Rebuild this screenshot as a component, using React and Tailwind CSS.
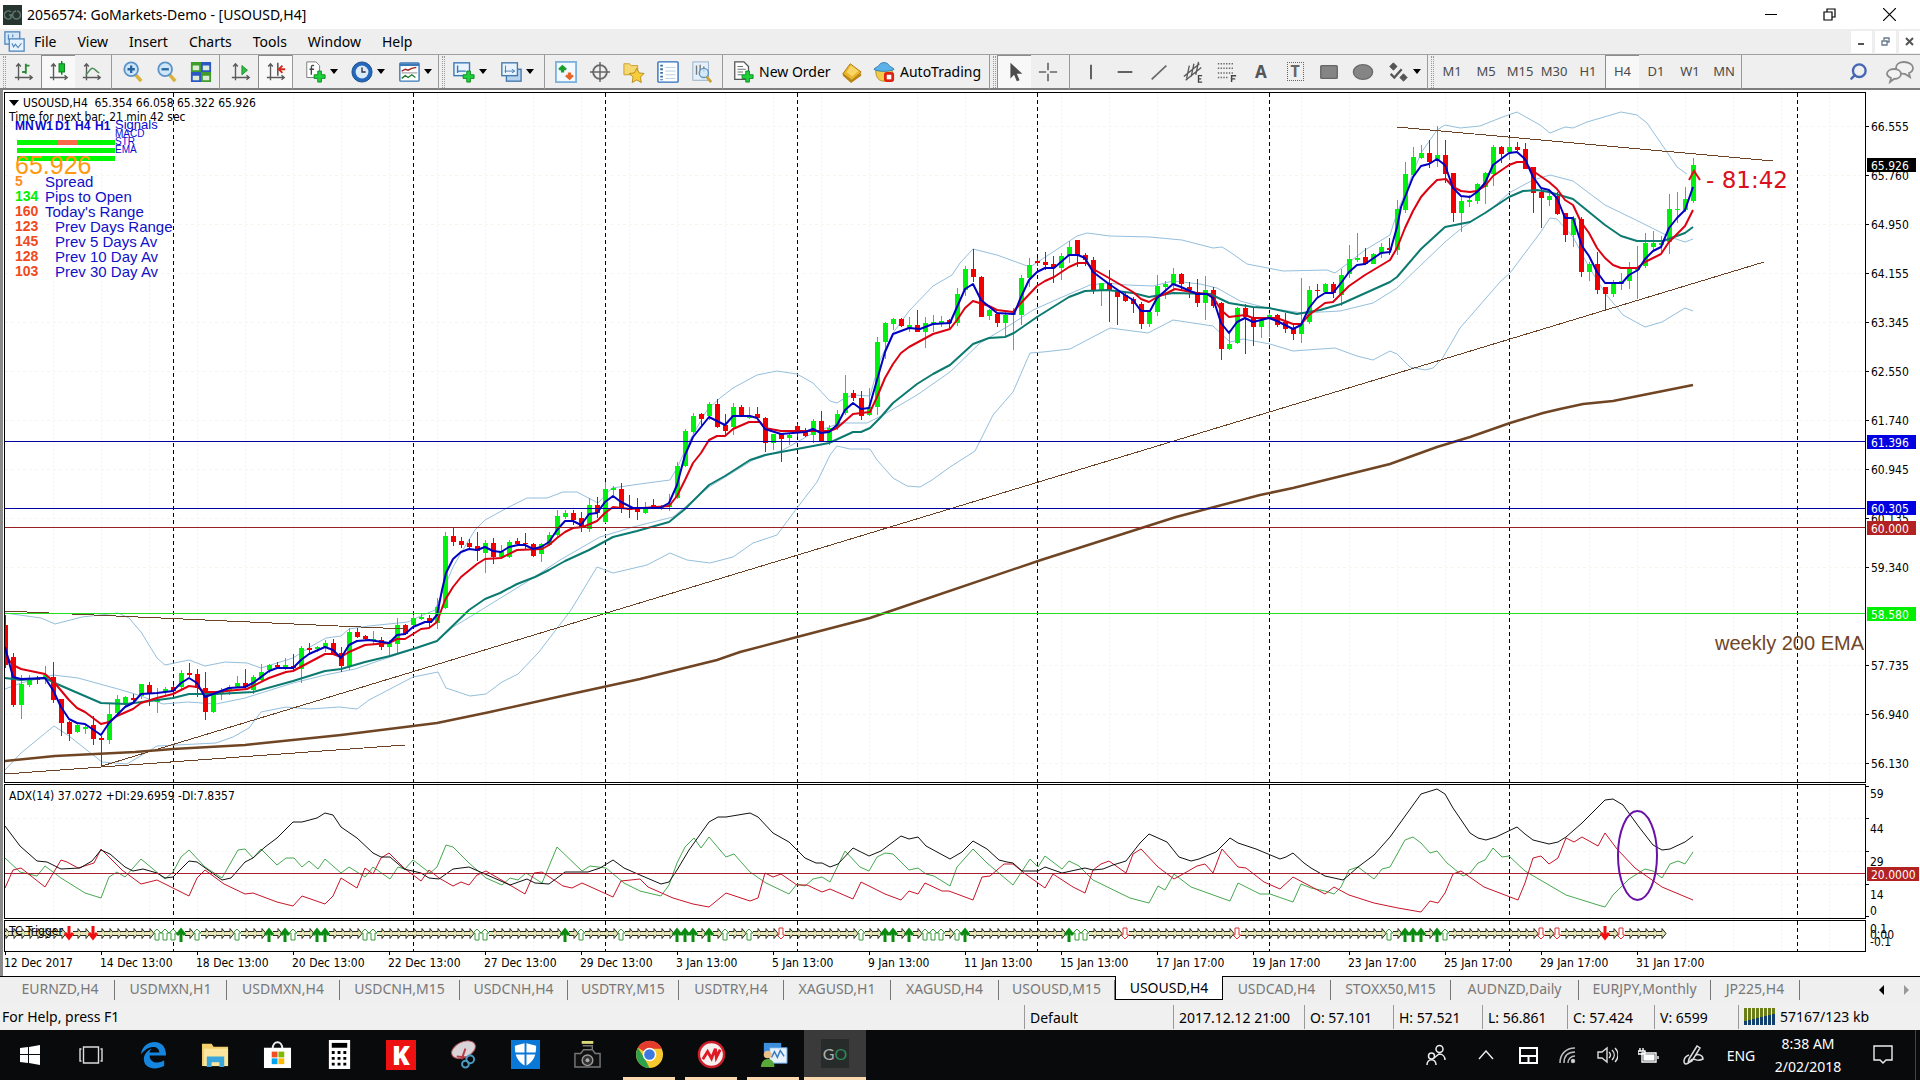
import { Search } from 'lucide-react'

const BAR_W = 8
const FIRST_X = 5

// one entry per bar: direction, high, body top, body bottom, low
const candleData = `d615 625 665 668;d653 657 705 707;u675 684 705 719;u675 678 685 687;d676 678 680 684;u666 675 678 684;d662 677 700 703;d699 699 723 736;d721 722 734 741;u724 725 732 733;u724 727 729 734;d716 725 739 745;d736 738 740 766;u703 714 740 744;u695 699 713 715;u696 697 703 706;d694 698 700 702;u684 684 696 699;d682 685 694 706;u688 700 702 713;u687 689 692 695;d685 687 691 693;u670 673 687 689;d663 673 675 677;d669 674 688 697;d672 688 712 720;u693 695 712 713;u688 691 694 700;u685 687 690 695;u676 683 687 688;d669 683 687 690;u675 677 690 694;u664 672 680 682;u664 665 670 673;d662 665 667 669;u658 665 667 670;d654 666 668 671;u646 648 669 683;d643 648 650 655;u646 647 649 652;u640 643 647 652;d639 643 654 655;d647 653 666 672;u628 632 666 670;d628 632 637 638;d635 636 639 640;u631 639 641 645;d637 640 647 650;u640 643 647 656;u618 625 644 653;d624 625 634 635;u615 618 625 627;u613 617 619 620;d615 618 623 627;u598 607 623 629;u532 536 608 609;d528 536 542 546;d537 541 545 548;d539 543 547 550;d532 546 551 561;u540 543 553 573;d538 543 557 564;u545 551 557 558;u540 542 557 558;d538 541 544 545;d533 543 544 549;d543 544 556 557;u543 544 554 562;u532 535 545 546;u510 516 535 537;u510 513 517 519;d510 513 520 525;d512 518 527 532;u498 505 529 532;d497 505 513 518;u482 489 522 523;u486 488 490 495;d483 489 508 513;d495 508 510 518;d498 509 512 520;u502 509 513 514;d499 505 508 509;u505 507 509 510;u494 503 507 511;u462 466 498 499;u429 431 466 467;u413 416 432 434;d413 414 419 425;u402 404 416 420;d399 404 427 428;d414 425 431 435;u403 407 427 435;d405 407 416 417;u407 416 418 419;d407 414 418 419;d417 418 443 452;u434 434 443 450;d433 433 439 462;u434 435 438 445;d424 426 430 437;d428 431 436 437;u419 421 435 443;d411 421 441 442;u425 428 441 445;u410 414 427 430;u375 393 413 415;d390 393 398 401;d391 398 416 420;u388 407 415 416;u337 342 407 415;u322 323 342 359;u318 319 324 330;d318 319 326 327;u317 325 328 332;d310 325 332 332;u317 323 332 348;u315 322 324 332;u316 321 323 327;d319 320 323 328;u288 294 323 326;u266 269 290 296;d249 269 277 282;d276 277 317 317;u309 310 316 320;d313 314 323 327;u311 315 323 337;u308 313 315 350;u275 278 315 325;u258 265 278 287;d258 261 263 266;d252 262 265 270;d256 264 267 283;u253 256 268 280;u241 247 255 263;d240 240 255 267;d253 255 260 266;d257 260 290 294;u283 283 290 306;d270 283 290 322;d291 292 297 325;d293 295 301 302;d297 299 304 313;d302 304 324 329;u311 312 324 327;u275 286 312 316;u281 284 287 299;u268 274 284 290;d273 274 284 290;d282 287 290 298;d279 292 303 307;u276 290 303 320;d287 290 306 308;d302 303 349 360;u330 344 349 350;u307 308 343 344;d304 308 317 354;d308 317 327 346;u318 320 327 338;u313 315 318 337;d314 315 325 327;d313 322 329 333;d323 328 334 340;u278 323 334 343;u286 290 322 324;d284 290 291 297;u283 284 292 293;d282 284 293 298;u269 275 295 306;u245 259 274 278;u233 258 260 262;d248 257 264 265;u253 254 264 264;u243 247 253 258;d238 248 250 255;u200 209 250 255;u162 174 210 213;u147 157 175 178;u145 153 158 159;d140 153 162 168;u126 155 160 167;d140 155 174 183;d173 173 213 222;u197 201 213 232;u195 200 202 207;u183 184 201 204;u172 173 187 204;u145 147 174 186;d146 147 154 163;u138 147 152 160;d142 147 150 151;d143 149 169 169;d167 167 193 213;d188 192 198 228;u193 196 200 206;d192 196 214 215;d213 213 235 242;u216 218 235 247;d217 219 272 277;u262 264 272 281;d252 264 290 294;d287 287 294 310;u280 283 294 297;u273 281 284 290;u262 267 281 289;u246 268 270 299;u233 243 266 268;u231 243 247 250;u236 243 245 252;u194 209 242 254;u192 209 210 223;u187 199 210 212;u158 165 201 203`

const candles = candleData.split(';').map((row, i) => {
  const [high, top, bottom, low] = row.slice(1).split(' ').map(Number)
  return { x: FIRST_X + i * BAR_W, up: row[0] === 'u', high, top, bottom, low }
})

const fastMa = '5,647 13,677 21,679 45,678 53,690 61,707 69,719 77,723 85,724 101,735 109,723 117,715 125,707 133,703 141,694 157,693 173,691 181,683 189,678 197,683 205,697 213,694 229,688 245,687 253,683 269,671 277,668 293,668 301,660 309,654 325,647 333,650 341,658 349,645 357,641 369,640 389,643 397,635 405,634 413,627 425,622 431,622 437,615 442,590 446,573 453,559 461,552 469,549 477,550 485,547 493,551 501,552 509,547 518,545 525,545 533,549 541,547 549,542 557,530 565,521 573,521 581,525 589,514 597,513 605,502 613,496 621,502 633,508 660,508 669,503 677,485 685,455 693,437 701,427 709,417 725,425 733,416 750,416 757,418 765,429 781,434 805,432 813,429 821,433 829,432 837,425 845,410 853,403 861,409 869,408 877,380 885,352 893,334 909,328 920,329 933,324 950,323 957,307 965,289 973,284 981,300 997,313 1014,314 1021,297 1029,280 1037,272 1045,268 1054,268 1069,255 1078,255 1085,258 1093,272 1109,284 1125,295 1133,300 1141,311 1150,311 1157,298 1173,284 1181,287 1197,294 1207,294 1213,298 1221,323 1229,333 1237,322 1245,318 1253,322 1269,318 1277,321 1293,329 1301,325 1309,308 1317,298 1325,293 1333,293 1341,283 1349,272 1357,265 1365,264 1381,253 1390,252 1397,227 1401,207 1405,197 1413,177 1421,166 1429,164 1437,159 1445,165 1453,188 1461,196 1470,197 1477,192 1485,183 1493,165 1509,153 1517,152 1525,159 1533,177 1541,188 1549,190 1557,198 1565,218 1573,218 1582,246 1589,256 1597,272 1605,283 1622,283 1629,275 1638,270 1645,259 1653,251 1661,247 1669,228 1677,218 1685,210 1693,187'
const midMa = '5,650 9,660 13,665 21,669 45,674 53,681 69,700 77,708 85,712 101,724 109,722 117,716 133,709 141,703 157,698 173,694 189,686 197,687 205,692 216,692 247,689 269,678 286,672 293,671 325,654 333,654 341,657 349,652 365,645 389,643 397,639 405,639 421,629 429,628 437,622 445,600 453,587 461,577 477,564 485,559 501,558 517,550 542,549 549,545 557,538 565,532 573,528 583,527 597,521 605,513 613,507 630,509 643,508 669,506 677,496 685,480 693,463 701,453 709,440 717,436 725,436 733,429 749,422 760,422 765,428 781,431 830,431 837,428 853,414 870,412 877,397 885,378 893,364 901,353 909,347 933,334 950,329 957,320 965,308 973,301 989,306 997,310 1013,312 1021,303 1037,286 1045,281 1054,277 1069,267 1078,263 1087,263 1093,269 1109,278 1133,292 1141,299 1149,302 1157,297 1165,294 1175,289 1197,293 1207,294 1213,297 1221,310 1229,317 1245,315 1253,318 1277,318 1293,324 1301,324 1309,315 1325,303 1333,302 1349,286 1365,275 1390,260 1397,248 1405,228 1413,211 1421,197 1429,188 1437,180 1446,179 1453,187 1461,191 1470,192 1477,191 1485,186 1493,176 1509,165 1517,162 1523,162 1533,171 1549,182 1557,189 1565,200 1573,205 1581,222 1589,233 1597,248 1605,258 1613,265 1621,268 1637,268 1645,262 1661,254 1669,242 1677,234 1685,226 1693,210'
const slowMa = '5,678 21,680 45,678 57,684 101,703 126,704 173,698 189,694 216,694 253,692 293,681 325,671 341,669 365,662 390,656 413,649 437,641 469,610 485,599 500,593 517,584 535,577 549,570 565,561 589,550 613,537 637,531 669,522 685,509 709,485 725,476 750,460 765,455 797,449 829,443 853,432 861,432 870,428 880,418 893,403 917,384 933,374 950,365 973,344 989,338 1005,337 1014,333 1037,317 1069,297 1085,291 1107,290 1133,293 1149,297 1173,293 1210,294 1229,303 1253,307 1269,308 1297,314 1320,310 1341,304 1390,282 1397,277 1421,249 1445,227 1470,222 1485,213 1509,197 1523,191 1537,190 1549,192 1573,199 1589,212 1605,225 1621,236 1637,241 1663,241 1685,233 1693,227'
const bandUpper = '5,613 41,618 55,624 82,617 118,613 129,618 141,632 157,658 165,665 189,660 205,666 225,662 247,663 261,668 293,658 310,647 326,638 341,636 349,629 369,626 408,622 423,615 435,610 453,567 461,553 475,530 485,520 507,508 527,498 547,498 563,492 577,492 598,503 612,488 647,483 670,480 677,468 690,440 707,410 720,398 733,388 757,375 777,371 797,374 813,383 830,401 837,403 845,398 853,395 870,396 880,360 893,333 909,311 933,286 952,275 960,263 973,249 997,255 1030,267 1053,252 1077,236 1087,233 1110,236 1150,237 1182,240 1213,248 1222,247 1230,252 1247,264 1283,271 1327,270 1335,273 1343,267 1365,250 1390,235 1397,213 1421,153 1437,130 1445,125 1460,128 1480,126 1500,118 1517,112 1540,125 1550,133 1565,127 1573,128 1587,122 1621,112 1637,115 1647,123 1667,152 1677,167 1687,174'
const bandMiddle = '5,689 21,683 53,675 78,678 118,689 135,694 163,704 188,702 216,704 245,698 293,683 325,675 355,669 390,657 437,641 453,627 473,615 533,578 560,560 600,537 633,527 673,517 709,487 753,460 783,450 813,433 840,423 867,423 883,415 917,395 950,372 980,343 1010,325 1033,310 1060,298 1090,285 1107,283 1127,285 1153,286 1173,281 1200,284 1217,288 1240,301 1267,308 1303,313 1340,311 1373,303 1397,288 1421,265 1445,242 1463,227 1490,210 1509,193 1533,180 1550,175 1573,181 1605,205 1640,222 1670,237 1685,242 1693,239'
const bandLower = '5,770 21,753 54,726 69,736 102,762 127,764 157,746 216,743 233,737 249,728 261,712 286,707 310,709 339,707 357,709 369,700 413,677 438,672 446,688 470,696 486,694 502,682 518,674 539,652 571,610 597,567 613,573 647,565 670,553 687,560 710,563 733,557 753,543 777,535 797,508 817,482 830,455 837,446 850,449 870,449 877,460 893,478 907,486 920,487 932,480 950,467 975,451 993,415 1013,392 1030,353 1043,352 1070,349 1110,328 1148,333 1173,320 1213,326 1230,342 1243,339 1270,344 1293,351 1335,348 1357,356 1373,360 1390,351 1397,354 1410,367 1425,370 1433,368 1442,359 1460,328 1500,282 1510,273 1540,233 1550,218 1557,219 1573,237 1589,267 1605,293 1623,315 1645,327 1662,322 1685,308 1693,311'
const ema200 = '5,761 55,756 135,752 173,749 245,745 341,735 437,723 490,712 571,694 640,679 717,660 740,652 797,637 870,618 920,601 1041,560 1176,517 1260,495 1293,488 1390,464 1437,447 1470,437 1510,423 1543,413 1560,409 1583,404 1613,401 1643,395 1693,385'

const adx = '5,826 20,846 37,861 47,862 61,869 80,868 92,861 101,850 110,854 125,867 133,871 143,869 157,873 165,878 173,877 189,861 197,862 222,880 231,878 245,862 253,858 265,847 277,838 293,822 302,822 317,818 325,813 333,815 341,827 357,838 373,853 381,857 390,857 404,869 421,873 429,878 439,879 453,869 469,867 494,878 510,885 527,879 535,883 549,884 565,872 588,872 600,868 613,860 624,868 640,875 661,884 669,882 677,870 689,850 709,822 718,817 726,817 738,815 750,813 758,817 773,833 789,842 805,858 816,863 822,863 830,867 838,864 853,848 869,856 881,851 901,836 909,839 918,837 926,846 950,859 962,852 973,841 987,849 999,860 1007,862 1013,863 1022,871 1038,871 1045,867 1062,873 1085,868 1093,870 1103,869 1113,865 1126,861 1140,843 1149,834 1167,842 1179,857 1191,861 1199,859 1216,852 1230,838 1238,843 1256,849 1280,859 1286,857 1293,853 1304,863 1311,868 1325,876 1343,880 1349,875 1358,867 1374,855 1390,837 1421,794 1437,789 1445,794 1453,808 1470,833 1478,838 1486,840 1496,837 1517,827 1525,834 1533,840 1549,844 1558,842 1566,837 1582,823 1605,800 1613,799 1623,805 1639,827 1653,845 1662,850 1670,849 1685,842 1693,836'
const plusDi = '5,858 20,872 37,876 45,866 61,878 85,893 101,898 109,877 117,872 125,877 141,859 165,879 173,872 181,857 189,850 205,867 222,878 238,850 245,849 253,858 261,849 277,865 286,858 294,858 302,867 309,861 318,869 325,859 341,873 349,867 365,877 373,867 390,879 398,867 405,869 413,860 430,873 437,867 446,845 453,847 469,863 486,878 502,885 510,878 518,880 526,873 542,883 557,847 582,871 590,866 606,868 624,883 640,891 661,896 669,885 677,863 685,847 694,838 701,848 709,837 726,857 734,854 750,872 766,883 789,894 797,884 805,886 813,879 822,877 830,882 845,851 860,867 869,871 877,857 885,853 893,854 909,870 918,868 926,874 934,876 950,886 957,867 973,849 987,863 1013,885 1030,859 1038,867 1045,856 1062,869 1069,861 1079,866 1093,880 1130,898 1149,903 1158,886 1165,890 1174,874 1191,887 1230,901 1238,883 1260,894 1270,894 1293,902 1301,884 1311,888 1325,891 1334,894 1341,887 1349,870 1358,867 1374,879 1382,869 1390,867 1405,840 1413,837 1421,843 1430,853 1437,851 1447,863 1463,876 1470,873 1478,863 1485,860 1493,848 1502,857 1509,856 1525,871 1566,895 1598,905 1605,907 1613,895 1629,879 1645,869 1653,871 1662,878 1670,864 1678,861 1685,864 1693,852'
const minusDi = '5,888 13,870 21,868 45,887 61,860 67,862 78,868 94,863 101,849 110,858 122,870 141,884 157,880 189,896 197,878 205,870 224,884 245,894 253,893 277,902 293,906 302,896 325,904 333,896 341,878 357,888 365,868 373,874 381,858 389,853 404,868 421,881 429,870 439,878 453,886 461,882 469,885 477,875 486,871 498,878 525,894 534,873 542,872 563,886 572,888 582,883 613,897 621,881 640,879 648,887 673,898 693,904 709,907 726,893 750,901 758,898 765,873 773,877 781,874 797,885 807,885 822,892 830,889 853,899 861,882 885,894 901,900 909,891 918,894 925,883 942,891 949,891 973,900 982,877 990,876 1004,864 1013,864 1024,873 1045,888 1053,874 1073,887 1085,893 1093,870 1101,864 1109,861 1126,873 1133,854 1141,849 1158,867 1174,879 1183,874 1197,866 1205,864 1213,873 1222,849 1238,867 1246,868 1264,882 1280,889 1293,877 1325,894 1334,887 1349,895 1374,903 1398,908 1421,912 1430,901 1438,903 1445,893 1453,874 1461,871 1484,887 1518,900 1525,883 1533,858 1541,856 1549,864 1558,858 1566,838 1574,842 1582,837 1598,846 1605,833 1617,849 1635,868 1662,887 1693,900'

const periodLines = [173, 413, 605, 797, 1037, 1269, 1509, 1797]
const gridX = Array.from({ length: 38 }, (_, i) => 53 + i * 48)

const strongUp = [181, 269, 285, 317, 325, 565, 677, 685, 693, 709, 885, 893, 909, 965, 1069, 1405, 1413, 1421, 1437]
const weakUp = [157, 165, 173, 197, 237, 293, 365, 373, 477, 485, 581, 621, 725, 749, 861, 925, 933, 941, 957, 1077, 1085, 1389, 1445]
const strongDown = [69, 93, 1605]
const weakDown = [781, 1125, 1237, 1541, 1557, 1621]
const neutral = Array.from({ length: 208 }, (_, i) => FIRST_X + i * BAR_W).filter(
  (x) => ![...strongUp, ...weakUp, ...strongDown, ...weakDown].includes(x)
)

const prices = [
  ['66.555', 126], ['65.760', 175], ['64.950', 224], ['64.155', 273], ['63.345', 322], ['62.550', 371], ['61.740', 420],
  ['60.945', 469], ['60.135', 518], ['59.340', 567], ['57.735', 665], ['56.940', 714], ['56.130', 763],
]
const priceTags = [
  ['65.926', 165, '#000000'], ['61.396', 442, '#0000e0'], ['60.305', 508, '#0000e0'], ['60.000', 528, '#b22222'], ['58.580', 614, '#00ee00'],
]

const dates = [
  '12 Dec 2017', '14 Dec 13:00', '18 Dec 13:00', '20 Dec 13:00', '22 Dec 13:00', '27 Dec 13:00', '29 Dec 13:00', '3 Jan 13:00', '5 Jan 13:00',
  '9 Jan 13:00', '11 Jan 13:00', '15 Jan 13:00', '17 Jan 17:00', '19 Jan 17:00', '23 Jan 17:00', '25 Jan 17:00', '29 Jan 17:00', '31 Jan 17:00',
]

const tabs = [
  ['EURNZD,H4', 'w-[109px]'], ['USDMXN,H1', 'w-[112px]'], ['USDMXN,H4', 'w-[113px]'], ['USDCNH,M15', 'w-[120px]'], ['USDCNH,H4', 'w-[108px]'],
  ['USDTRY,M15', 'w-[111px]'], ['USDTRY,H4', 'w-[105px]'], ['XAGUSD,H1', 'w-[107px]'], ['XAGUSD,H4', 'w-[108px]'], ['USOUSD,M15', 'w-[116px]'],
  ['USOUSD,H4', 'w-[108px]'], ['USDCAD,H4', 'w-[108px]'], ['STOXX50,M15', 'w-[120px]'], ['AUDNZD,Daily', 'w-[128px]'],
  ['EURJPY,Monthly', 'w-[132px]'], ['JP225,H4', 'w-[89px]'],
]

const ranges = [
  ['5', 'Spread', 'text-[#ff8c1a]', 'pl-0'],
  ['134', 'Pips to Open', 'text-[#00f000]', 'pl-0'],
  ['160', "Today's Range", 'text-[#f04a1c]', 'pl-0'],
  ['123', 'Prev Days Range', 'text-[#f04a1c]', 'pl-[10px]'],
  ['145', 'Prev 5 Days Av', 'text-[#f04a1c]', 'pl-[10px]'],
  ['128', 'Prev 10 Day Av', 'text-[#f04a1c]', 'pl-[10px]'],
  ['103', 'Prev 30 Day Av', 'text-[#f04a1c]', 'pl-[10px]'],
]

function Svg({ size = 24, children, className = '' }) {
  return (
    <svg width={size} height={size} viewBox="0 0 24 24" fill="none" className={`shrink-0 ${className}`}>
      {children}
    </svg>
  )
}

const Axes = () => <path d="M6 3v18M3.500 6L6 3l2.500 3M2 18h19M18 15.500l3 2.500-3 2.500" stroke="#5a5a5a" strokeWidth="1.500" />
const Plus = () => <path d="M13 12h4v-4h4v4h4v4h-4v4h-4v-4h-4z" transform="translate(-2 3)" fill="#1fd13c" stroke="#0a8a1e" />

const icons = {
  bars: <><Axes /><path d="M14 14V3M14 5h4M10 12h4" stroke="#2a8a38" strokeWidth="2" /></>,
  candle: <><Axes /><path d="M15 0v15" stroke="#0a7a1a" strokeWidth="1.5" /><rect x="12" y="3" width="6" height="9" fill="#12c32e" stroke="#0a7a1a" /></>,
  line: <><Axes /><path d="M5 15c3-1 5-8 8-7s4 4 7 5" stroke="#4f8f5a" strokeWidth="1.6" /></>,
  zoomIn: <><path d="M14 14l7 8" stroke="#d9b13b" strokeWidth="4" /><circle cx="10" cy="9" r="7.500" fill="#cfe6f8" stroke="#5b93c9" strokeWidth="2" /><path d="M10 5v8M6 9h8" stroke="#27659f" strokeWidth="2.500" /></>,
  zoomOut: <><path d="M14 14l7 8" stroke="#d9b13b" strokeWidth="4" /><circle cx="10" cy="9" r="7.500" fill="#cfe6f8" stroke="#5b93c9" strokeWidth="2" /><path d="M6 9h8" stroke="#27659f" strokeWidth="2.500" /></>,
  tile: <><path d="M1 1h11v11H1zM12 12h11v11H12z" fill="#3f9b2a" /><path d="M12 1h11v11H12zM1 12h11v11H1z" fill="#2a57c4" /><path d="M3 5h7v5H3zM14 5h7v5h-7zM3 16h7v5H3zM14 16h7v5h-7z" fill="#dcebd8" /></>,
  scroll: <><Axes /><path d="M13 5l6 5-6 5z" fill="#2fbf45" stroke="#1a8a2a" /></>,
  shift: <><Axes /><path d="M14 2v14" stroke="#4d4d4d" strokeWidth="1.6" /><path d="M22 9h-6M19 5l-4 4 4 4" stroke="#d32a1a" strokeWidth="2" /></>,
  indicator: <><path d="M3 1h10l4 4v13H3z" fill="#fff" stroke="#777" /><path d="M11 5c-3-1-3 1-3 4v6M6 9h5" stroke="#444" strokeWidth="1.5" /><Plus /></>,
  clock: <><circle cx="12" cy="12" r="11" fill="#2368bd" stroke="#174a8b" /><circle cx="12" cy="12" r="7" fill="#dcebfa" /><path d="M12 7v5h4" stroke="#333" strokeWidth="1.5" /></>,
  template: <><rect x="2" y="2" width="21" height="20" rx="1" fill="#fff" stroke="#3a78b8" strokeWidth="1.5" /><path d="M2 4h21" stroke="#3a78b8" strokeWidth="3" /><path d="M4 11l4-2 3 1 4-2 5-1" stroke="#a02020" strokeWidth="1.5" /><path d="M4 13h17" stroke="#888" /><path d="M4 19l4-3 3 2 4-3 4 3" stroke="#207a2a" strokeWidth="1.5" /></>,
  newChart: <><rect x="1" y="2" width="17" height="14" fill="#e8f3fd" stroke="#3a78b8" strokeWidth="1.5" /><path d="M5 5v8M5 11h9" stroke="#3a78b8" strokeWidth="1.5" /><Plus /></>,
  profiles: <><rect x="7" y="9" width="16" height="13" fill="#b7d3ee" stroke="#4679ad" strokeWidth="1.5" /><rect x="2" y="2" width="17" height="14" fill="#e8f3fd" stroke="#4679ad" strokeWidth="1.5" /><path d="M6 5v8M5 11h11M13 9l3 2-3 2" stroke="#4679ad" /></>,
  market: <><rect x="1" y="1" width="22" height="22" fill="#f2f9ff" stroke="#7fb2dd" strokeWidth="2" /><path d="M8 4l5 4.500-2 2-1-1v3H6.500v-3l-1 1-2-2z" fill="#18a02c" /><path d="M16 21l-5-4.500 2-2 1 1v-3h3.500v3l1-1 2 2z" fill="#e8662a" /></>,
  target: <><circle cx="12" cy="12" r="7.500" stroke="#666" strokeWidth="2" /><path d="M12 1v22M1 12h22" stroke="#666" strokeWidth="1.6" /></>,
  favorites: <><path d="M1 3h6l2 2h7v10H1z" fill="#f6d873" stroke="#c79b2b" /><path d="M15 8l2.500 5 5.500.6-4 4 1 5.900-5-2.900-5 2.900 1-5.900-4-4 5.500-.6z" fill="#f7cd3c" stroke="#b98a13" /></>,
  navigator: <><rect x="1" y="1" width="22" height="22" rx="1" fill="#fff" stroke="#2d6fbd" strokeWidth="1.500" /><path d="M5 4v17" stroke="#3d6fa5" strokeWidth="3" strokeDasharray="2 2" /><path d="M9 7h11M9 11h11M9 15h11M9 19h11" stroke="#b5cce4" /></>,
  tester: <><rect x="2" y="1" width="17" height="20" fill="#e6f0fa" stroke="#92abc4" /><path d="M6 5v10M10 4v9M14 6v6" stroke="#777" strokeWidth="1.5" /><circle cx="14" cy="13" r="5" fill="#cfe6f8" fillOpacity=".8" stroke="#5b93c9" strokeWidth="1.5" /><path d="M17 17l5 6" stroke="#caa133" strokeWidth="3" /></>,
  order: <><path d="M3 1h10l5 5v14H3z" fill="#fff" stroke="#555" strokeWidth="1.4" /><path d="M6 6h6M6 9h9M6 12h6M6 15h5" stroke="#666" /><Plus /></>,
  gold: <><path d="M2 13l9 8 11-8v3l-11 8-9-8z" fill="#b98412" /><path d="M2 14L10 3l12 9-10 9z" fill="#eab62c" stroke="#a9780d" /><path d="M6 12l5-7 8 6-7 6z" fill="#f9d566" /></>,
  auto: <><path d="M3 10c0 9 4 12 9 12s9-3 9-12z" fill="#f1cb49" stroke="#b08c1f" /><path d="M1 9c2-3 5-2 6-5 2-3 8-3 10 0 1 3 4 2 6 5-4 3-18 3-22 0z" fill="#5bb2e6" stroke="#2e7db5" /><rect x="12" y="12" width="11" height="11" rx="3" fill="#dd2211" /><rect x="15" y="15" width="5" height="5" fill="#fff" /></>,
  cursor: <path d="M7 2v17l4-4 3 7 3-1-3-7h6z" fill="#4d4d4d" />,
  cross: <path d="M12 2v8M12 14v8M2 12h8M14 12h8" stroke="#666" strokeWidth="1.8" />,
  vline: <path d="M12 4v16" stroke="#555" strokeWidth="2" />,
  hline: <path d="M4 12h16" stroke="#555" strokeWidth="2" />,
  trend: <path d="M4 20L20 5" stroke="#666" strokeWidth="1.8" />,
  channel: <><path d="M2 17L19 3M4 21L21 7M8 5l-3 14M13 3l-3 14M18 1l-3 14" stroke="#555" strokeWidth="1.4" /><path d="M22 16h-4v7h4M18 19.500h3" stroke="#444" strokeWidth="1.5" /></>,
  fibo: <><path d="M2 3h18M2 8h18M2 13h18M2 18h12" stroke="#666" strokeWidth="1.6" strokeDasharray="1.500 1.500" /><path d="M22 16h-5v7M17 19.500h4" stroke="#444" strokeWidth="1.6" /></>,
  rect: <rect x="3" y="5" width="18" height="14" rx="1" fill="#858585" stroke="#666" strokeWidth="1.5" />,
  oval: <ellipse cx="12" cy="12" rx="10.500" ry="8" fill="#858585" stroke="#6a6a6a" strokeWidth="1.5" />,
  shapes: <><path d="M7 2l4 4-4 4-4-4zM18 14l4 4-4 4-4-4z" fill="#555" stroke="#555" /><path d="M4 14l4 4 8-9" stroke="#555" strokeWidth="2.500" /></>,
}

function Tool({ name, label, active, menu }) {
  return (
    <button
      aria-label={label}
      className={`h-[33px] flex items-center justify-center shrink-0 ${menu ? 'w-[47px] gap-1' : 'w-[34px]'} ${active ? 'bg-[#f8f8f8] border-l border-t border-[#8c8c8c]' : ''}`}
    >
      <Svg size={22}>{icons[name]}</Svg>
      {menu && <span className="w-0 h-0 border-x-4 border-t-[5px] border-x-transparent border-t-black" />}
    </button>
  )
}

const Sep = () => <span className="w-px h-[34px] bg-[#9a9a9a] shrink-0" />
const Grip = () => <span className="w-[3px] h-[32px] ml-[3px] mr-px shrink-0 border-x border-dotted border-[#9a9a9a]" />

function TitleBar() {
  return (
    <header className="h-[29px] bg-white flex items-center pl-[3px]">
      <div className="w-[19px] h-[20px] bg-[#26332f] flex items-center justify-center">
        <svg width="17" height="12" viewBox="0 0 17 12" fill="none" stroke="#5f7a70" strokeWidth="1.5">
          <path d="M7 3a4 4 0 1 0 0 6V6H5M12 2a4 4 0 1 0 1 0" />
        </svg>
      </div>
      <h1 className="ml-[5px] text-[14px] leading-5 flex-1">2056574: GoMarkets-Demo - [USOUSD,H4]</h1>
      <button aria-label="Minimize" className="w-[58px] h-full flex items-center justify-center">
        <svg width="13" height="13" stroke="#000"><path d="M0 6.500h12" /></svg>
      </button>
      <button aria-label="Restore" className="w-[58px] h-full flex items-center justify-center">
        <svg width="13" height="13" fill="none" stroke="#000" strokeWidth="1.2"><path d="M1 4h8v8H1zM4 4V1h8v8H9" /></svg>
      </button>
      <button aria-label="Close" className="w-[62px] h-full flex items-center justify-center">
        <svg width="13" height="13" stroke="#000" strokeWidth="1.2"><path d="M0 0l13 13M13 0L0 13" /></svg>
      </button>
    </header>
  )
}

function MenuBar() {
  return (
    <nav className="h-[26px] bg-[#eeeeee] border-b border-[#a0a0a0] flex items-center pl-[4px] text-[14px] leading-5">
      <Svg size={21}>
        <rect x="1" y="1" width="17" height="14" fill="#d6e8f8" stroke="#4f87bd" strokeWidth="1.5" />
        <rect x="6" y="9" width="17" height="14" fill="#e8f3fd" stroke="#4f87bd" strokeWidth="1.5" />
        <path d="M9 14l2 4 2-3 3 4 4-5M5 4v6M10 4v3" stroke="#4f87bd" strokeWidth="1.3" />
      </Svg>
      <div className="flex flex-1 gap-[21px] ml-[9px]">
        {['File', 'View', 'Insert', 'Charts', 'Tools', 'Window', 'Help'].map((m) => <button key={m}>{m}</button>)}
      </div>
      <div className="flex gap-[3px] text-[#555]">
        <button aria-label="Minimize chart" className="w-[21px] h-[22px] bg-white flex items-center justify-center">
          <svg width="9" height="9" stroke="#555" strokeWidth="2"><path d="M1 7h6" /></svg>
        </button>
        <button aria-label="Restore chart" className="w-[21px] h-[22px] bg-white flex items-center justify-center">
          <svg width="9" height="9" fill="none" stroke="#67788a" strokeWidth="1.3"><path d="M1 4h5v4H1zM3 3V1h5v4H6" /></svg>
        </button>
        <button aria-label="Close chart" className="w-[21px] h-[22px] bg-white flex items-center justify-center">
          <svg width="9" height="9" stroke="#555" strokeWidth="2"><path d="M1 1l7 7M8 1L1 8" /></svg>
        </button>
      </div>
    </nav>
  )
}

function Toolbar() {
  return (
    <div className="h-[35px] bg-[#efefef] border-b-2 border-[#7d7d7d] flex items-center">
      <Grip />
      <Tool name="bars" label="Bar chart" />
      <Tool name="candle" label="Candlesticks" active />
      <Tool name="line" label="Line chart" />
      <div className="flex items-center pr-[4px] pl-[2px]"><Sep /></div>
      <Tool name="zoomIn" label="Zoom in" />
      <Tool name="zoomOut" label="Zoom out" />
      <Tool name="tile" label="Tile windows" />
      <div className="flex items-center pr-[4px] pl-px"><Sep /></div>
      <Tool name="scroll" label="Auto scroll" />
      <Tool name="shift" label="Chart shift" active />
      <div className="flex items-center pr-[4px]"><Sep /></div>
      <Tool name="indicator" label="Indicators" menu />
      <Tool name="clock" label="Periods" menu />
      <Tool name="template" label="Templates" menu />
      <Sep />
      <Grip />
      <Tool name="newChart" label="New chart" menu />
      <Tool name="profiles" label="Profiles" menu />
      <div className="flex items-center px-[4px]"><Sep /></div>
      <Tool name="market" label="Market watch" />
      <Tool name="target" label="Data window" />
      <Tool name="favorites" label="Navigator" />
      <Tool name="navigator" label="Terminal" />
      <Tool name="tester" label="Strategy tester" />
      <div className="flex items-center px-[3px]"><Sep /></div>
      <button className="w-[109px] pl-[6px] flex items-center gap-[5px] shrink-0 whitespace-nowrap text-[14px]">
        <Svg size={22}>{icons.order}</Svg>New Order
      </button>
      <Tool name="gold" label="MetaEditor" />
      <button className="w-[120px] pl-[4px] flex items-center gap-[5px] shrink-0 whitespace-nowrap text-[14px]">
        <Svg size={22}>{icons.auto}</Svg>AutoTrading
      </button>
      <Sep />
      <Grip />
      <Tool name="cursor" label="Cursor" active />
      <Tool name="cross" label="Crosshair" />
      <div className="flex items-center px-[4px]"><Sep /></div>
      <Tool name="vline" label="Vertical line" />
      <Tool name="hline" label="Horizontal line" />
      <Tool name="trend" label="Trendline" />
      <Tool name="channel" label="Channel" />
      <Tool name="fibo" label="Fibonacci" />
      <button className="w-[34px] shrink-0 text-[17px] font-bold text-[#555]">A</button>
      <button className="w-[34px] h-[33px] shrink-0 flex items-center justify-center">
        <span className="w-[17px] h-[19px] border border-dotted border-[#666] text-[16px] leading-4 font-bold text-[#666]">T</span>
      </button>
      <Tool name="rect" label="Rectangle" />
      <Tool name="oval" label="Ellipse" />
      <Tool name="shapes" label="Arrows" menu />
      <Sep />
      <Grip />
      <div className="flex text-[13px] text-[#4a4a4a] font-['Noto_Sans',sans-serif]">
        {['M1', 'M5', 'M15', 'M30', 'H1', 'H4', 'D1', 'W1', 'MN'].map((tf) => (
          <button key={tf} className={`w-[34px] h-[33px] ${tf === 'H4' ? 'bg-[#f8f8f8] border-l border-t border-[#8c8c8c]' : ''}`}>{tf}</button>
        ))}
      </div>
      <Sep />
      <div className="flex-1" />
      <button aria-label="Search" className="mr-[18px] -scale-x-100"><Search size={19} strokeWidth={3} color="#4668b4" /></button>
      <button aria-label="Chat" className="mr-[6px]">
        <svg width="28" height="24" viewBox="0 0 28 24" fill="#f2f2f2" stroke="#8a8a8a" strokeWidth="1.8">
          <path d="M18 2c5 0 9 2.500 9 6 0 2.500-1.500 4-4 5l1 4-5-3c-6 0-9-3-9-6 0-3.500 3-6 8-6z" />
          <path d="M8 9c4 0 7 2 7 5s-3 5-7 5l-4 3 1-4c-2-1-4-2-4-4 0-3 3-5 7-5z" />
        </svg>
      </button>
    </div>
  )
}

function PeriodLines({ top, bottom }) {
  return (
    <g shapeRendering="crispEdges">
      {gridX.map((x) => <path key={x} d={`M${x + 0.5} ${top}V${bottom}`} stroke="#f4f4ea" strokeDasharray="2 2" />)}
      {periodLines.map((x) => <path key={x} d={`M${x + 0.5} ${top}V${bottom}`} stroke="#000" strokeDasharray="4 3" />)}
    </g>
  )
}

function PriceChart() {
  return (
    <svg viewBox="5 93 1860 689" preserveAspectRatio="none" className="block w-full h-full" fill="none">
      {prices.map(([p, y]) => <path key={p} d={`M5 ${y + 0.5}H1865`} stroke="#f6f6ea" strokeDasharray="3 3" />)}
      <PeriodLines top={93} bottom={782} />
      <g stroke="#95bfdc">
        <polyline points={bandUpper} />
        <polyline points={bandMiddle} />
        <polyline points={bandLower} />
      </g>
      <g shapeRendering="crispEdges">
        {candles.map((c) => (
          <g key={c.x} fill={c.up ? '#00f010' : '#f00000'}>
            <rect x={c.x} y={c.high} width="1" height={c.low - c.high} fill={c.up ? '#20d820' : '#c01020'} />
            <rect x={c.x - 2} y={c.top} width="5" height={Math.max(c.bottom - c.top, 1)} />
          </g>
        ))}
      </g>
      <path d="M5 611L405 629M5 774L405 745M102 766L1764 262M1397 127L1773 161" stroke="#6b4226" shapeRendering="crispEdges" />
      <polyline points={ema200} strokeWidth="2.500" stroke="#704524" />
      <g strokeWidth="2" strokeLinejoin="round">
        <polyline points={slowMa} stroke="#0b7a70" />
        <polyline points={midMa} stroke="#dc0010" />
        <polyline points={fastMa} stroke="#0000c0" />
      </g>
      <g shapeRendering="crispEdges">
        <path d="M5 441.500H1865M5 508.500H1865" stroke="#0000a8" />
        <path d="M5 527.500H1865" stroke="#982020" />
        <path d="M5 613.500H1865" stroke="#20e020" />
      </g>
      <path d="M1689 180l5-9 6 9" stroke="#e01010" strokeWidth="2" />
    </svg>
  )
}

function SignalPanel() {
  return (
    <div className="absolute left-[4px] top-[3px] text-[12px] leading-[14px]">
      <div className="flex items-center font-['DejaVu_Sans_Condensed','DejaVu_Sans',sans-serif]">
        <span className="w-0 h-0 border-x-[5px] border-t-[6px] border-x-transparent border-t-black mr-[4px]" />
        USOUSD,H4&nbsp; 65.354 66.058 65.322 65.926
      </div>
      <div className="font-['DejaVu_Sans_Condensed','DejaVu_Sans',sans-serif]">Time for next bar: 21 min 42 sec</div>
      <div className="flex h-[40px] pl-[6px] text-[#0a0ad0] font-['Liberation_Sans',sans-serif] -mt-[7px]">
        <div className="w-[100px]">
          <div className="flex font-bold h-[18px] items-center">
            <span className="w-[20px]">MN</span><span className="w-[20px]">W1</span><span className="w-[20px]">D1</span>
            <span className="w-[20px]">H4</span><span>H1</span>
          </div>
          <div className="flex flex-col gap-[3px] pl-[2px] mt-[5px]">
            <div className="flex h-[5px] bg-[#00f800] pl-[40px]"><span className="w-[20px] bg-[#f86a4a]" /></div>
            <div className="h-[5px] bg-[#00f800]" />
            <div className="h-[5px] bg-[#00f800]" />
          </div>
        </div>
        <div className="text-[10px] leading-[8px]">
          <div className="text-[13px] h-[13px] leading-[16px]">Signals</div>
          <div>MACD</div>
          <div>STR</div>
          <div>EMA</div>
        </div>
      </div>
      <div className="pl-[6px] font-['Liberation_Sans',sans-serif]">
        <div className="text-[25px] leading-[17px]  text-[#ff9a10]">65.926</div>
        {ranges.map(([value, label, color, indent]) => (
          <div key={label} className="flex leading-[15px]">
            <span className={`w-[30px] text-[14px] font-bold ${color}`}>{value}</span>
            <span className={`text-[15px] text-[#1010c8] whitespace-nowrap ${indent}`}>{label}</span>
          </div>
        ))}
      </div>
    </div>
  )
}

function PriceAxis() {
  return (
    <svg width="54" height="691" viewBox="0 92 54 691" fontSize="12" className="shrink-0 font-['DejaVu_Sans_Condensed','DejaVu_Sans',sans-serif]">
      {prices.map(([p, y]) => (
        <g key={p}>
          <path d={`M0 ${y + 0.5}h3`} stroke="#000" />
          <text x="5" y={y + 5}>{p}</text>
        </g>
      ))}
      {priceTags.map(([p, y, color]) => (
        <g key={p}>
          <rect x="1" y={y - 7} width="49" height="14" fill={color} />
          <text x="5" y={y + 5} fill="#fff">{p}</text>
        </g>
      ))}
    </svg>
  )
}

function AdxChart() {
  return (
    <svg viewBox="5 785 1860 133" preserveAspectRatio="none" className="block w-full h-full" fill="none">
      <path d="M5 818.500H1865M5 851.500H1865M5 884.500H1865" stroke="#f6f6ea" strokeDasharray="3 3" />
      <PeriodLines top={785} bottom={918} />
      <polyline points={plusDi} stroke="#48a850" />
      <polyline points={minusDi} stroke="#c81428" />
      <polyline points={adx} stroke="#111" />
      <path d="M5 873.500H1865" stroke="#a82030" shapeRendering="crispEdges" />
      <ellipse cx="1637.500" cy="855.500" rx="19.500" ry="44.500" stroke="#6a12a8" strokeWidth="2" />
    </svg>
  )
}

function TriggerChart() {
  const y = 933
  return (
    <svg viewBox="5 921 1860 30" preserveAspectRatio="none" className="block w-full h-full" fill="none">
      <PeriodLines top={921} bottom={951} />
      {neutral.map((x) => <path key={x} d={`M${x - 4} ${y - 1.5}h5v-3l4 5-4 5v-3h-5`} fill="#e6e6b8" stroke="#26261a" />)}
      {weakUp.map((x) => <path key={x} d={`M${x} ${y - 4}l4 4h-2v7h-4v-7h-2z`} fill="#fff" stroke="#3a9a3a" />)}
      {weakDown.map((x) => <path key={x} d={`M${x} ${y + 6}l4-4h-2v-7h-4v7h-2z`} fill="#fff" stroke="#e03030" />)}
      {strongUp.map((x) => <path key={x} d={`M${x} ${y + 9}v-12M${x - 4} ${y + 2}l4-5 4 5`} stroke="#0a8a10" strokeWidth="3" />)}
      {strongDown.map((x) => <path key={x} d={`M${x} ${y - 7}v12M${x - 4} ${y}l4 5 4-5`} stroke="#f01010" strokeWidth="3" />)}
    </svg>
  )
}

function ChartWindow() {
  return (
    <main className="bg-white pt-[2px] pl-px border-l-[3px] border-[#8a8a8a] flex flex-col gap-px h-[886px] font-['DejaVu_Sans_Condensed','DejaVu_Sans',sans-serif] text-[12px]">
      <section className="flex h-[691px] shrink-0">
        <div className="relative flex-1 border border-black">
          <PriceChart />
          <SignalPanel />
          <div className="absolute right-[77px] top-[75px] text-[23px] leading-[24px] text-[#d81020] font-['DejaVu_Sans',sans-serif]">- 81:42</div>
          <div className="absolute right-px top-[538px] text-[20px] leading-[24px] text-[#704524] font-['Liberation_Sans',sans-serif]">weekly 200 EMA</div>
        </div>
        <PriceAxis />
      </section>
      <section className="flex h-[135px] shrink-0">
        <div className="relative flex-1 border border-black">
          <AdxChart />
          <div className="absolute left-[4px] top-[3px] leading-[16px]">ADX(14) 37.0272 +DI:29.6959 -DI:7.8357</div>
        </div>
        <svg width="54" height="135" viewBox="0 784 54 135" fontSize="12" className="shrink-0">
          {[['59', 798], ['44', 833], ['29', 866], ['14', 899], ['0', 915]].map(([v, y]) => <text key={v} x="4" y={y}>{v}</text>)}
          <path d="M0 786.500h3M0 818.500h3M0 851.500h3M0 884.500h3M0 916.500h3" stroke="#000" />
          <rect x="1" y="867" width="52" height="14" fill="#b22222" />
          <text x="5" y="879" fill="#fff">20.0000</text>
        </svg>
      </section>
      <section className="flex h-[32px] shrink-0">
        <div className="relative flex-1 border border-black">
          <TriggerChart />
          <div className="absolute left-[4px] top-[2px] leading-[16px]">TC Trigger</div>
        </div>
        <svg width="54" height="32" viewBox="0 920 54 32" fontSize="12" className="shrink-0">
          <text x="4" y="933">0.1</text>
          <text x="4" y="939">0.00</text>
          <text x="4" y="946">-0.1</text>
        </svg>
      </section>
      <div className="flex pr-[188px] -mt-[2px]">
        {dates.map((d) => (
          <div key={d} className="flex-1 whitespace-nowrap leading-[16px]">
            <span className="block w-px h-[4px] ml-px bg-black" />
            {d}
          </div>
        ))}
      </div>
    </main>
  )
}

function ChartTabs() {
  return (
    <div className="h-[27px] bg-[#efefef] border-t border-black flex items-start text-[14px] text-[#787878] pl-[6px]">
      {tabs.map(([name, width]) =>
        name === 'USOUSD,H4' ? (
          <button key={name} className={`h-[24px] -mt-px bg-white text-black border border-t-0 border-black shrink-0 ${width}`}>{name}</button>
        ) : (
          <button key={name} className={`h-[20px] mt-[3px] leading-[16px] pb-[2px] border-r border-[#777] shrink-0 ${width}`}>{name}</button>
        )
      )}
      <div className="flex-1" />
      <button aria-label="Previous tabs" className="mt-[8px] mr-[19px]"><svg width="6" height="10"><path d="M5 0v10L0 5z" /></svg></button>
      <button aria-label="Next tabs" className="mt-[8px] mr-[10px]"><svg width="6" height="10" fill="#999"><path d="M0 0v10l5-5z" /></svg></button>
    </div>
  )
}

const statusCells = [
  ['Default', 'w-[149px]'], ['2017.12.12 21:00', 'w-[131px]'], ['O: 57.101', 'w-[89px]'], ['H: 57.521', 'w-[89px]'],
  ['L: 56.861', 'w-[85px]'], ['C: 57.424', 'w-[87px]'], ['V: 6599', 'w-[84px]'],
]

function StatusBar() {
  return (
    <footer className="h-[27px] bg-[#f0f0f0] flex items-center text-[14px] pl-[2px]">
      <span className="flex-1">For Help, press F1</span>
      {statusCells.map(([t, width]) => (
        <span key={t} className={`h-[24px] pt-[2px] border-l border-[#999] pl-[5px] shrink-0 ${width}`}>{t}</span>
      ))}
      <span className="h-[24px] w-[182px] border-l border-[#999] pl-[5px] flex items-center gap-[5px] shrink-0">
        <svg width="31" height="17">
          {[0, 1, 2, 3, 4, 5, 6, 7].map((i) => (
            <g key={i}>
              <rect x={i * 4} y="0" width="3" height="17" fill="#6b7d18" />
              <rect x={i * 4} y={13 - i} width="3" height={4 + i} fill="#14406e" />
            </g>
          ))}
        </svg>
        57167/123 kb
      </span>
    </footer>
  )
}

const apps = [
  ['Edge', false, <path d="M2 15C3 6 10 2 16 2c8 0 12 6 12 14H11c0 8 9 9 15 5v6C16 32 5 29 5 20c0-5 3-9 8-11-2 2-2 3-2 4h10c0-8-12-8-19 2z" fill="#1585dd" />],
  ['File Explorer', false, <><path d="M1 4h10l2 3h15v20H1z" fill="#f3cf6b" /><path d="M3 9h25v18H3z" fill="#fbe69f" /><path d="M6 28V17h18v11h-5v-5h-8v5z" fill="#39a7dc" /></>],
  ['Store', false, <><path d="M10 9c0-9 10-9 10 0" stroke="#eee" strokeWidth="2" fill="none" /><path d="M1 8h28v21H1z" fill="#fff" /><path d="M9 12h6v6H9z" fill="#f25022" /><path d="M16 12h6v6h-6z" fill="#7fba00" /><path d="M9 19h6v6H9z" fill="#00a4ef" /><path d="M16 19h6v6h-6z" fill="#ffb900" /></>],
  ['Calculator', false, <><path d="M4 0h22v30H4z" fill="#fff" /><path d="M7 3h16v5H7z" /><path d="M7 13h3M13 13h3M19 13h3M7 19h3M13 19h3M19 19h3M7 25h3M13 25h3M19 25h3" stroke="#000" strokeWidth="3" /></>],
  ['K', false, null],
  ['Snipping Tool', false, <><ellipse cx="15" cy="10" rx="13" ry="8" transform="rotate(-25 15 10)" fill="#d9d4d8" stroke="#b65560" /><path d="M17 9l-4 11M8 17l10 1" stroke="#b53a44" strokeWidth="2" /><circle cx="22" cy="20" r="4" fill="none" stroke="#4a9ac4" strokeWidth="2" /><circle cx="17" cy="25" r="3.500" fill="none" stroke="#4a9ac4" strokeWidth="2" /></>],
  ['Defender', false, <><path d="M0 0h30v30H0z" fill="#0a78d6" /><path d="M15 3l11 3c0 10-2 16-11 21C6 22 4 16 4 6z" fill="#fff" /><path d="M15 3v24M4 14h22" stroke="#0a78d6" strokeWidth="2" /></>],
  ['Camera', false, <><path d="M9 1h12v3H9z" fill="#dcd87a" /><path d="M2 14h6l3-4h9l3 4h5v14H2zM10 6h10v4" fill="#111" stroke="#777" strokeWidth="1.5" /><circle cx="15" cy="21" r="5.500" fill="#333" stroke="#999" strokeWidth="1.500" /><circle cx="15" cy="21" r="2" fill="#aaa" /></>],
  ['Chrome', true, <><circle cx="15" cy="15" r="14" fill="#f7c92e" /><path d="M15 15L3 8a14 14 0 0 1 25 1H15z" fill="#e33b2e" /><path d="M3 8l7 11 5 10A14 14 0 0 1 3 8z" fill="#2da14e" /><circle cx="15" cy="15" r="7" fill="#fff" /><circle cx="15" cy="15" r="5.500" fill="#3c78e0" /></>],
  ['Trading', true, <><circle cx="15" cy="15" r="13" fill="#f5f0ee" stroke="#cc1d2a" strokeWidth="2.500" /><path d="M6 20l5-8 4 7 4-10 1 9 4-8" fill="none" stroke="#e01a24" strokeWidth="3" /></>],
  ['MetaTrader', true, <><path d="M5 3h18v14H5z" fill="#3e8ede" /><path d="M11 8h18v16H11z" fill="#e8f2fc" stroke="#5a9ede" /><path d="M13 18l3-6 3 6 3-7 4 6" fill="none" stroke="#3b79bb" strokeWidth="1.500" /><circle cx="9" cy="15" r="4" fill="#ecc08a" /><path d="M2 28c0-11 14-11 14 0z" fill="#58a93a" /></>],
]

function Taskbar() {
  return (
    <footer className="h-[50px] bg-[#080a0b] text-white flex items-stretch">
      <button aria-label="Start" className="w-[60px] flex items-center justify-center">
        <svg width="20" height="20" viewBox="0 0 20 20" fill="#fff"><path d="M0 3l8-1v7H0zM9 2l11-2v9H9zM0 10h8v8l-8-1zM9 10h11v10L9 18z" /></svg>
      </button>
      <button aria-label="Task view" className="w-[62px] flex items-center justify-center">
        <svg width="24" height="18" fill="none" stroke="#ddd" strokeWidth="1.4"><path d="M4.500 1h15v16h-15zM2.500 3H1v12h1.500M21.500 3H23v12h-1.500" /></svg>
      </button>
      {apps.map(([name, open, drawing]) => (
        <button key={name} aria-label={name} className="w-[62px] px-[5px] flex flex-col items-center justify-between pt-[10px]">
          {drawing
            ? <svg width="29" height="29" viewBox="0 0 30 30">{drawing}</svg>
            : <span className="w-[30px] h-[30px] bg-[#ee1111] text-[26px] leading-[30px] font-extrabold font-['Open_Sans',sans-serif]">K</span>}
          <span className={`w-full h-[3px] ${open ? 'bg-[#fad9b0]' : ''}`} />
        </button>
      ))}
      <button aria-label="GO Markets" className="w-[62px] flex items-center justify-center bg-[#3a3a3a] border-b-[3px] border-[#fad9b0]">
        <span className="w-[28px] h-[29px] bg-[#272b2a] flex items-center justify-center font-['Lato',sans-serif] text-[16px] text-[#b0b0b0]">G<span className="text-[#2d8a5c]">O</span></span>
      </button>
      <div className="flex-1" />
      <div className="flex items-center">
        <button aria-label="People" className="w-[50px] flex justify-center">
          <svg width="20" height="22" fill="none" stroke="#eee" strokeWidth="1.500"><circle cx="13.500" cy="5" r="3.500" /><circle cx="5.500" cy="12" r="3" /><path d="M8 14l5-4c4 0 6 3 6 6M1 21c0-7 9-7 9 0" /></svg>
        </button>
        <button aria-label="Show hidden icons" className="w-[50px] flex justify-center">
          <svg width="16" height="10" fill="none" stroke="#eee" strokeWidth="1.400"><path d="M1 9l7-8 7 8" /></svg>
        </button>
        <button aria-label="Touch pad" className="w-[35px] flex justify-center">
          <svg width="19" height="17" fill="none" stroke="#fff" strokeWidth="2"><path d="M1 1h17v15H1zM1 9h17M9.500 9v7" /></svg>
        </button>
        <button aria-label="Wi-Fi" className="w-[42px] flex justify-center">
          <svg width="17" height="17" fill="none" stroke="#bbb" strokeWidth="1.500"><path d="M1 16C1 7 7 1 16 1M5 16C5 9 9 5 16 5M9 16c0-4 3-7 7-7" /><circle cx="14" cy="14" r="1.500" fill="#fff" /></svg>
        </button>
        <button aria-label="Volume" className="w-[38px] flex justify-center">
          <svg width="21" height="18" fill="none" stroke="#ddd" strokeWidth="1.400"><path d="M1 6h4l5-4v14l-5-4H1zM12 6c2 2 2 4 0 6M15 4c3 3 3 7 0 10M18 2c4 4 4 10 0 14" /></svg>
        </button>
        <button aria-label="Battery" className="w-[44px] flex justify-center">
          <svg width="21" height="15" fill="none" stroke="#fff" strokeWidth="1.400"><path d="M4 5h14v9H4zM20 8v3M2 0v3M5 0v3M0 3h7v3H0z" /><path d="M6 7h10v5H6z" fill="#fff" /></svg>
        </button>
        <button aria-label="Pen" className="w-[46px] flex justify-center">
          <svg width="21" height="20" fill="none" stroke="#ddd" strokeWidth="1.500"><path d="M6 14L14 1l3 2-8 13-4 2zM6 10c-6 2-6 9-3 9 4 0 4-5 7-5s4 3 10 0c0-4-5-5-7-4" /></svg>
        </button>
        <span className="w-[50px] text-center text-[14px]">ENG</span>
        <div className="w-[84px] text-center text-[14px] leading-[23px]">
          <div>8:38 AM</div>
          <div>2/02/2018</div>
        </div>
        <button aria-label="Notifications" className="w-[66px] h-[50px] flex justify-center items-center border-r border-[#444] mr-[4px]">
          <svg width="20" height="20" fill="none" stroke="#eee" strokeWidth="1.400"><path d="M1 1h18v14h-6l-3 3-3-3H1z" /></svg>
        </button>
      </div>
    </footer>
  )
}

export default function App() {
  return (
    <div className="w-full min-h-screen bg-[#efefef] text-black font-['Noto_Sans','Open_Sans',sans-serif] overflow-hidden">
      <TitleBar />
      <MenuBar />
      <Toolbar />
      <ChartWindow />
      <ChartTabs />
      <StatusBar />
      <Taskbar />
    </div>
  )
}
